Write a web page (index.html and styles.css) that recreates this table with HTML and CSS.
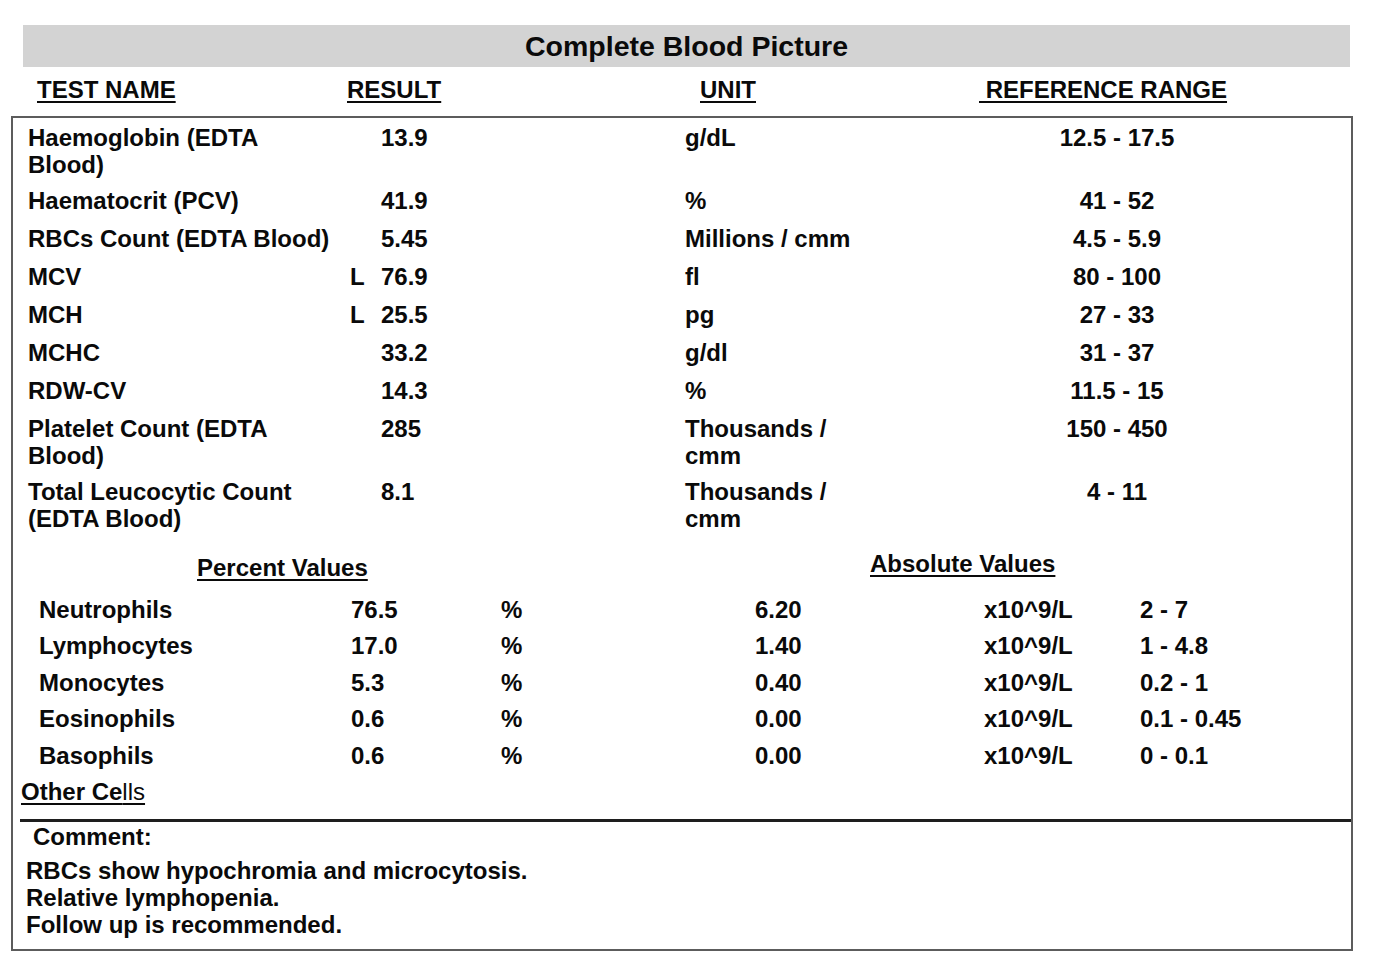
FILE: index.html
```html
<!DOCTYPE html>
<html>
<head>
<meta charset="utf-8">
<title>Complete Blood Picture</title>
<link rel="stylesheet" href="styles.css">
</head>
<body>
<div class="page">
  <div class="title-bar">Complete Blood Picture</div>
  <div class="col-heads">
    <span class="h-name u">TEST NAME</span>
    <span class="h-result u">RESULT</span>
    <span class="h-unit u">UNIT</span>
    <span class="h-range u">&nbsp;REFERENCE RANGE</span>
  </div>
  <div class="box">
    <div class="results">
      <div class="c-name">Haemoglobin (EDTA<br>Blood)</div><div class="c-flag"></div><div class="c-res">13.9</div><div class="c-unit">g/dL</div><div class="c-range">12.5 - 17.5</div>
      <div class="c-name">Haematocrit (PCV)</div><div class="c-flag"></div><div class="c-res">41.9</div><div class="c-unit">%</div><div class="c-range">41 - 52</div>
      <div class="c-name">RBCs Count (EDTA Blood)</div><div class="c-flag"></div><div class="c-res">5.45</div><div class="c-unit">Millions / cmm</div><div class="c-range">4.5 - 5.9</div>
      <div class="c-name">MCV</div><div class="c-flag">L</div><div class="c-res">76.9</div><div class="c-unit">fl</div><div class="c-range">80 - 100</div>
      <div class="c-name">MCH</div><div class="c-flag">L</div><div class="c-res">25.5</div><div class="c-unit">pg</div><div class="c-range">27 - 33</div>
      <div class="c-name">MCHC</div><div class="c-flag"></div><div class="c-res">33.2</div><div class="c-unit">g/dl</div><div class="c-range">31 - 37</div>
      <div class="c-name">RDW-CV</div><div class="c-flag"></div><div class="c-res">14.3</div><div class="c-unit">%</div><div class="c-range">11.5 - 15</div>
      <div class="c-name">Platelet Count (EDTA<br>Blood)</div><div class="c-flag"></div><div class="c-res">285</div><div class="c-unit">Thousands /<br>cmm</div><div class="c-range">150 - 450</div>
      <div class="c-name">Total Leucocytic Count<br>(EDTA Blood)</div><div class="c-flag"></div><div class="c-res">8.1</div><div class="c-unit">Thousands /<br>cmm</div><div class="c-range">4 - 11</div>
    </div>

    <div class="diff-heads">
      <div class="dh-pct"><span class="u">Percent Values</span></div>
      <div class="dh-abs"><span class="u">Absolute Values</span></div>
    </div>

    <div class="diff">
      <div>Neutrophils</div><div>76.5</div><div>%</div><div>6.20</div><div>x10^9/L</div><div>2 - 7</div>
      <div>Lymphocytes</div><div>17.0</div><div>%</div><div>1.40</div><div>x10^9/L</div><div>1 - 4.8</div>
      <div>Monocytes</div><div>5.3</div><div>%</div><div>0.40</div><div>x10^9/L</div><div>0.2 - 1</div>
      <div>Eosinophils</div><div>0.6</div><div>%</div><div>0.00</div><div>x10^9/L</div><div>0.1 - 0.45</div>
      <div>Basophils</div><div>0.6</div><div>%</div><div>0.00</div><div>x10^9/L</div><div>0 - 0.1</div>
    </div>

    <div class="other"><span class="u thin-u">Other Ce<span class="reg">lls</span></span></div>

    <div class="sep"></div>

    <div class="comment-head">Comment:</div>
    <div class="comment">RBCs show hypochromia and microcytosis.<br>Relative lymphopenia.<br>Follow up is recommended.</div>
  </div>
</div>
</body>
</html>
```

FILE: styles.css
```css
html, body {
  margin: 0;
  padding: 0;
  background: #ffffff;
}

body {
  font-family: "Liberation Sans", Arial, "Helvetica", sans-serif;
  font-weight: bold;
  color: #0a0a0a;
  font-size: 24px;
  line-height: 27px;
}

.page {
  width: 1380px;
  height: 962px;
  padding-top: 25px;
  box-sizing: border-box;
}

.title-bar {
  margin-left: 23px;
  width: 1327px;
  height: 42px;
  background: #d3d3d3;
  text-align: center;
  font-size: 28.5px;
  line-height: 42px;
}

.u {
  text-decoration: underline;
  text-decoration-thickness: 2px;
  text-underline-offset: 3px;
}

.thin-u {
  text-decoration-thickness: 1.5px;
}

.col-heads {
  display: flex;
  margin-top: 9px;
  padding-left: 37px;
  height: 27px;
  white-space: nowrap;
}

.h-name { width: 310px; }
.h-result { width: 353px; }
.h-unit { width: 279px; }

.box {
  margin-top: 13px;
  margin-left: 11px;
  width: 1342px;
  height: 835px;
  box-sizing: border-box;
  border: 2px solid #5c5c5c;
  padding-top: 6px;
}

.results {
  display: grid;
  grid-template-columns: 312px 41px 304px 305px 254px;
  grid-auto-rows: minmax(29px, auto);
  row-gap: 9px;
  padding-left: 15px;
  white-space: nowrap;
}

.c-flag { padding-left: 10px; }
.c-range { text-align: center; }

.diff-heads {
  display: grid;
  grid-template-columns: 857px 1fr;
  margin-top: 22px;
  height: 27px;
}

.dh-pct { padding-left: 184px; }
.dh-abs { margin-top: -4px; }

.diff {
  display: grid;
  grid-template-columns: 312px 150px 254px 229px 156px 1fr;
  grid-auto-rows: 36.5px;
  line-height: 36.5px;
  padding-left: 26px;
  margin-top: 10.5px;
  white-space: nowrap;
}

.other {
  margin-top: 4px;
  padding-left: 8px;
}

.reg { font-weight: normal; }

.sep {
  margin-top: 13.5px;
  margin-left: 7px;
  height: 3px;
  background: #1e1e1e;
}

.comment-head {
  margin-top: 1px;
  padding-left: 20px;
}

.comment {
  margin-top: 7px;
  padding-left: 13px;
}
```
